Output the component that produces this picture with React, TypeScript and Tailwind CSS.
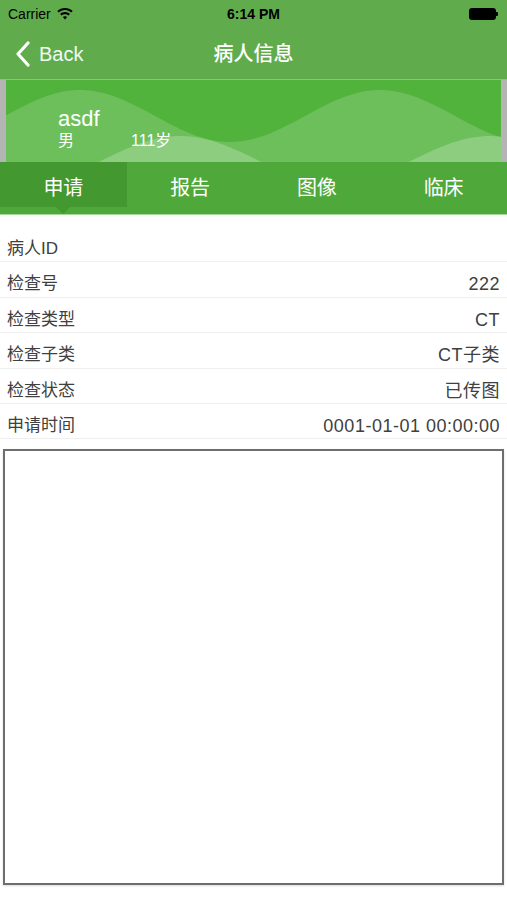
import React from "react";

const font = { fontFamily: '"Liberation Sans", "Noto Sans CJK SC", sans-serif' };

// rows of the 申请 tab
const rows = [
  { label: "病人ID", value: "" },
  { label: "检查号", value: "222" },
  { label: "检查类型", value: "CT" },
  { label: "检查子类", value: "CT子类" },
  { label: "检查状态", value: "已传图" },
  { label: "申请时间", value: "0001-01-01 00:00:00" },
];

const tabs = ["申请", "报告", "图像", "临床"];

// build a sine wave path across the banner
const wave = (mid: number, amp: number, peak: number, period: number) => {
  let d = "M0,82";
  for (let x = 0; x <= 495; x += 5) {
    const y = mid - amp * Math.cos(((x - peak) / period) * Math.PI * 2);
    d += ` L${x},${y.toFixed(1)}`;
  }
  return d + " L495,82 Z";
};

const WifiIcon = () => (
  <svg width="16" height="12" viewBox="0 0 16 12" fill="#000">
    <path d="M8 0C5 0 2.3 1.1 0.3 3l1.4 1.5C3.4 3 5.6 2.1 8 2.1s4.6.9 6.3 2.4L15.7 3C13.7 1.1 11 0 8 0z" />
    <path d="M8 4.1c-1.9 0-3.6.7-4.9 1.9l1.4 1.5C5.5 6.7 6.7 6.2 8 6.2s2.5.5 3.5 1.3l1.4-1.5C11.6 4.8 9.9 4.1 8 4.1z" />
    <path d="M8 8.2c-.8 0-1.6.3-2.1.8L8 11.4 10.1 9c-.5-.5-1.3-.8-2.1-.8z" />
  </svg>
);

export default function App() {
  return (
    <div className="w-[507px] h-[900px] bg-white overflow-hidden" style={font}>
      {/* status + nav bar */}
      <div className="bg-[#60ac4d] h-[79px] flex flex-col">
        <div className="h-[28px] flex items-center justify-between px-[8px] text-[14px] text-black">
          <div className="flex items-center gap-[6px]">
            <span>Carrier</span>
            <WifiIcon />
          </div>
          <span className="font-bold absolute left-1/2 -translate-x-1/2">6:14 PM</span>
          <div className="flex items-center mr-[1px]">
            <div className="w-[27px] h-[12px] rounded-[3px] bg-black" />
            <div className="w-[2px] h-[4px] bg-black rounded-r-[1px]" />
          </div>
        </div>
        <div className="relative flex-1 flex items-center">
          <div className="flex items-center pl-[15px] text-white">
            <svg width="16" height="26" viewBox="0 0 16 26" fill="none" stroke="white" strokeWidth="3.2" strokeLinecap="round" strokeLinejoin="round">
              <path d="M13 2 L3 13 L13 24" />
            </svg>
            <span className="text-[20px] ml-[8px] text-[#f2f8ef]">Back</span>
          </div>
          <span className="absolute left-1/2 -translate-x-1/2 text-[20px] font-medium text-white">病人信息</span>
        </div>
      </div>

      {/* banner */}
      <div className="h-[1px] bg-[#8fc281]" />
      <div className="flex h-[82px] bg-[#b4b4b4]">
        <div className="w-[6px]" />
        <div className="relative flex-1 bg-[#52b33c] overflow-hidden">
          <svg className="absolute inset-0" width="495" height="82" viewBox="0 0 495 82">
            <path d={wave(36, 26, 74, 300)} fill="#ffffff" fillOpacity="0.16" />
            <path d={wave(80, 24, 174, 310)} fill="#ffffff" fillOpacity="0.22" />
          </svg>
          <div className="relative pl-[52px] pt-[26px] text-white">
            <div className="text-[22px] leading-[26px]">asdf</div>
            <div className="flex text-[16px] leading-[18px]">
              <span className="w-[73px]">男</span>
              <span>111岁</span>
            </div>
          </div>
        </div>
        <div className="w-[6px]" />
      </div>

      {/* tabs */}
      <div className="h-[53px] bg-[#4fa83a] grid grid-cols-4 border-b border-[#a6d998]">
        {tabs.map((t, i) => (
          <div key={t} className="relative">
            <div
              className={`h-[45px] flex items-center justify-center pt-[7px] text-[20px] text-white ${
                i === 0 ? "bg-[#43982f]" : ""
              }`}
            >
              {t}
            </div>
            {i === 0 && (
              <div className="absolute left-1/2 -translate-x-1/2 top-[45px] w-0 h-0 border-l-[7px] border-r-[7px] border-t-[7px] border-l-transparent border-r-transparent border-t-[#43982f]" />
            )}
          </div>
        ))}
      </div>

      {/* info rows */}
      <div className="mt-[12px] flex flex-col">
        {rows.map((r) => (
          <div
            key={r.label}
            className="h-[35.4px] flex items-start justify-between px-[7px] pt-[12px] border-b border-[#efefef] text-[17px] leading-[20px] text-[#404040]"
          >
            <span>{r.label}</span>
            <span className="text-[18px] tracking-[0.5px]">{r.value}</span>
          </div>
        ))}
      </div>

      {/* empty content box */}
      <div className="mx-[3px] mt-[10px] h-[436px] border-2 border-[#6e6e6e] shadow-[0_1px_2px_rgba(0,0,0,0.15)]" />
    </div>
  );
}
